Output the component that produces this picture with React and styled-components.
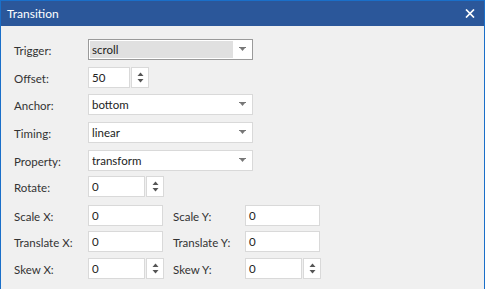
import React from "react";
import styled, { createGlobalStyle } from "styled-components";

const Global = createGlobalStyle`
  html, body { margin: 0; padding: 0; background: #f0f0f0; }
  body { font-family: "Segoe UI", Lato, "Noto Sans", sans-serif; }
`;

const Window = styled.div`
  width: 485px;
  height: 289px;
  box-sizing: border-box;
  border: 1px solid #1a6fc9;
  border-bottom: none;
  background: #f0f0f0;
  display: flex;
  flex-direction: column;
  overflow: hidden;
`;

const TitleBar = styled.div`
  height: 25px;
  background: #2b579a;
  color: #fff;
  display: flex;
  align-items: center;
  justify-content: space-between;
  padding: 0 9px 0 6px;
  font-size: 12px;
`;

const CloseBtn = styled.div`
  width: 10px;
  height: 10px;
  display: flex;
  align-items: center;
  justify-content: center;
`;

const Body = styled.div`
  padding: 13px 0 0 13px;
  display: flex;
  flex-direction: column;
`;

const Row = styled.div`
  display: flex;
  align-items: center;
  height: 21px;
  margin-top: ${(p) => p.$mt || 0}px;
`;

const Label = styled.div`
  width: ${(p) => p.$w || 74}px;
  font-size: 11.5px;
  color: #333;
  padding-top: 1px;
`;

const Select = styled.div`
  width: 165px;
  height: 21px;
  box-sizing: border-box;
  border: 1px solid ${(p) => (p.$active ? "#9a9a9a" : "#d9d9d9")};
  background: #fff;
  display: flex;
  align-items: stretch;
  padding: 1px;
`;

const SelectValue = styled.div`
  flex: 1;
  background: ${(p) => (p.$active ? "#e0e0e0" : "transparent")};
  font-size: 11.5px;
  color: #222;
  display: flex;
  align-items: center;
  padding-left: 2px;
`;

const Arrow = styled.div`
  width: 18px;
  display: flex;
  align-items: center;
  justify-content: center;
`;

const Input = styled.div`
  width: ${(p) => p.$w}px;
  height: 21px;
  box-sizing: border-box;
  border: 1px solid #d9d9d9;
  background: #fff;
  font-size: 11.5px;
  color: #222;
  display: flex;
  align-items: center;
  padding-left: 3px;
`;

const Spin = styled.div`
  width: 18px;
  height: 21px;
  box-sizing: border-box;
  border: 1px solid #d9d9d9;
  background: #fff;
  display: flex;
  flex-direction: column;
  align-items: center;
  justify-content: center;
  gap: 3px;
  margin-left: 1px;
`;

const Pair = styled.div`
  display: flex;
  align-items: center;
  width: ${(p) => p.$w || 159}px;
`;

const DropArrow = () => (
  <svg width="7" height="5" viewBox="0 0 7 5">
    <rect x="0" y="0" width="7" height="1" fill="#777" />
    <path d="M1 1 L6 1 L3.5 4 Z" fill="#777" />
  </svg>
);

const SpinArrows = () => (
  <>
    <svg width="7" height="4" viewBox="0 0 7 4">
      <path d="M0.5 4 L6.5 4 L3.5 0.5 Z" fill="#555" />
    </svg>
    <svg width="7" height="4" viewBox="0 0 7 4">
      <path d="M0.5 0 L6.5 0 L3.5 3.5 Z" fill="#555" />
    </svg>
  </>
);

const Combo = ({ value, active }) => (
  <Select $active={active}>
    <SelectValue $active={active}>{value}</SelectValue>
    <Arrow>
      <DropArrow />
    </Arrow>
  </Select>
);

const Spinner = ({ value, w }) => (
  <>
    <Input $w={w}>{value}</Input>
    <Spin>
      <SpinArrows />
    </Spin>
  </>
);

export default function App() {
  return (
    <>
      <Global />
      <Window>
        <TitleBar>
          <span>Transition</span>
          <CloseBtn>
            <svg width="10" height="9" viewBox="0 0 10 9">
              <path d="M1 0.5 L9 8.5 M9 0.5 L1 8.5" stroke="#fff" strokeWidth="1.7" />
            </svg>
          </CloseBtn>
        </TitleBar>
        <Body>
          <Row>
            <Label>Trigger:</Label>
            <Combo value="scroll" active />
          </Row>
          <Row $mt={7}>
            <Label>Offset:</Label>
            <Spinner value="50" w={42} />
          </Row>
          <Row $mt={6}>
            <Label>Anchor:</Label>
            <Combo value="bottom" />
          </Row>
          <Row $mt={7}>
            <Label>Timing:</Label>
            <Combo value="linear" />
          </Row>
          <Row $mt={7}>
            <Label>Property:</Label>
            <Combo value="transform" />
          </Row>
          <Row $mt={5}>
            <Label>Rotate:</Label>
            <Spinner value="0" w={57} />
          </Row>
          <Row $mt={8}>
            <Pair>
              <Label>Scale X:</Label>
              <Input $w={75}>0</Input>
            </Pair>
            <Pair>
              <Label $w={72}>Scale Y:</Label>
              <Input $w={75}>0</Input>
            </Pair>
          </Row>
          <Row $mt={5}>
            <Pair>
              <Label>Translate X:</Label>
              <Input $w={75}>0</Input>
            </Pair>
            <Pair>
              <Label $w={72}>Translate Y:</Label>
              <Input $w={75}>0</Input>
            </Pair>
          </Row>
          <Row $mt={6}>
            <Pair>
              <Label>Skew X:</Label>
              <Spinner value="0" w={57} />
            </Pair>
            <Pair>
              <Label $w={72}>Skew Y:</Label>
              <Spinner value="0" w={57} />
            </Pair>
          </Row>
        </Body>
      </Window>
    </>
  );
}
